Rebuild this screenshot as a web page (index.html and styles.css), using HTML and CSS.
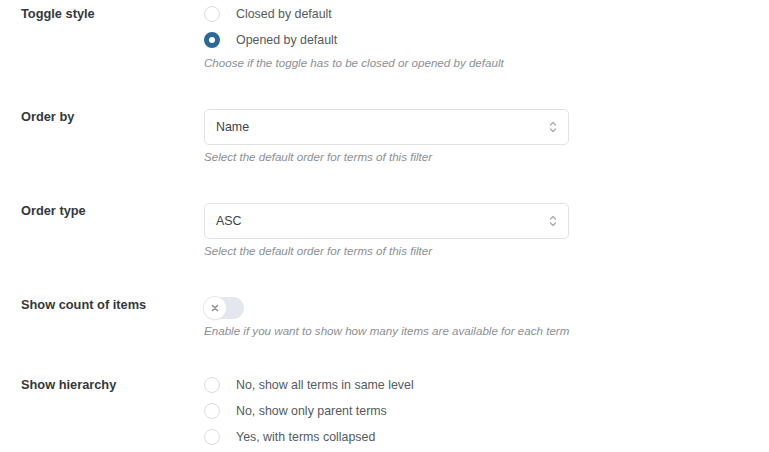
FILE: index.html
```
<!DOCTYPE html>
<html>
<head>
<meta charset="utf-8">
<link rel="stylesheet" href="styles.css">
</head>
<body>
<div class="page">
  <div class="row">
    <div class="label">Toggle style</div>
    <div class="field">
      <div class="radios">
        <div class="radio"><span class="circle"></span><span>Closed by default</span></div>
        <div class="radio"><span class="circle checked"></span><span>Opened by default</span></div>
      </div>
      <div class="desc desc-radio">Choose if the toggle has to be closed or opened by default</div>
    </div>
  </div>
  <div class="row">
    <div class="label">Order by</div>
    <div class="field">
      <div class="select"><span>Name</span>
        <svg class="chev" width="8" height="12" viewBox="0 0 8 12"><path d="M1.5 4 L4 1.5 L6.5 4 M1.5 8 L4 10.5 L6.5 8" fill="none" stroke="#a7aaad" stroke-width="1.2" stroke-linecap="round" stroke-linejoin="round"/></svg>
      </div>
      <div class="desc">Select the default order for terms of this filter</div>
    </div>
  </div>
  <div class="row">
    <div class="label">Order type</div>
    <div class="field">
      <div class="select"><span>ASC</span>
        <svg class="chev" width="8" height="12" viewBox="0 0 8 12"><path d="M1.5 4 L4 1.5 L6.5 4 M1.5 8 L4 10.5 L6.5 8" fill="none" stroke="#a7aaad" stroke-width="1.2" stroke-linecap="round" stroke-linejoin="round"/></svg>
      </div>
      <div class="desc">Select the default order for terms of this filter</div>
    </div>
  </div>
  <div class="row">
    <div class="label">Show count of items</div>
    <div class="field">
      <div class="toggle"><span class="knob">
        <svg width="8" height="8" viewBox="0 0 8 8"><path d="M1.5 1.5 L6.5 6.5 M6.5 1.5 L1.5 6.5" stroke="#8c8f94" stroke-width="1.6" stroke-linecap="round"/></svg>
      </span></div>
      <div class="desc">Enable if you want to show how many items are available for each term</div>
    </div>
  </div>
  <div class="row last">
    <div class="label">Show hierarchy</div>
    <div class="field">
      <div class="radios">
        <div class="radio"><span class="circle"></span><span>No, show all terms in same level</span></div>
        <div class="radio"><span class="circle"></span><span>No, show only parent terms</span></div>
        <div class="radio"><span class="circle"></span><span>Yes, with terms collapsed</span></div>
      </div>
    </div>
  </div>
</div>
</body>
</html>
```
FILE: styles.css
```
html, body {
  margin: 0;
  background: #ffffff;
}
body {
  font-family: "Liberation Sans", Arial, sans-serif;
  color: #50575e;
  font-size: 13px;
}
.page {
  padding: 6px 0 0 21px;
}
.row {
  display: grid;
  grid-template-columns: 183px 365px;
  margin-bottom: 38px;
}
.row.last {
  margin-bottom: 0;
}
.label {
  font-weight: bold;
  font-size: 12.8px;
  line-height: 16px;
  color: #33383d;
}
.radios {
  display: flex;
  flex-direction: column;
  gap: 10px;
}
.radio {
  display: flex;
  align-items: center;
  height: 16px;
  line-height: 16px;
  gap: 16px;
  font-size: 12.4px;
  color: #555a60;
  white-space: nowrap;
}
.circle {
  box-sizing: border-box;
  width: 16px;
  height: 16px;
  border-radius: 50%;
  border: 1px solid #dcdcde;
  background: #fff;
  flex: none;
}
.circle.checked {
  border: 5px solid #2a6a93;
  background: #fff;
}
.desc {
  margin-top: 4px;
  font-size: 11.6px;
  line-height: 16px;
  font-style: italic;
  color: #8c8f94;
  white-space: nowrap;
}
.desc-radio {
  margin-top: 7px;
}
.select {
  box-sizing: border-box;
  height: 36px;
  width: 365px;
  border: 1px solid #dfe3e8;
  border-radius: 5px;
  display: flex;
  align-items: center;
  justify-content: space-between;
  padding: 0 11px 0 11px;
  font-size: 12.4px;
  color: #3c434a;
}
.chev {
  display: block;
}
.toggle {
  width: 40px;
  height: 22px;
  border-radius: 11px;
  background: #e4e8ee;
  display: flex;
  align-items: center;
}
.knob {
  width: 22px;
  height: 22px;
  border-radius: 50%;
  background: #fff;
  box-shadow: 0 0 0 1px #e6e8eb, 0 1px 2px rgba(0,0,0,0.12);
  display: flex;
  align-items: center;
  justify-content: center;
}
.knob svg {
  display: block;
}
```
